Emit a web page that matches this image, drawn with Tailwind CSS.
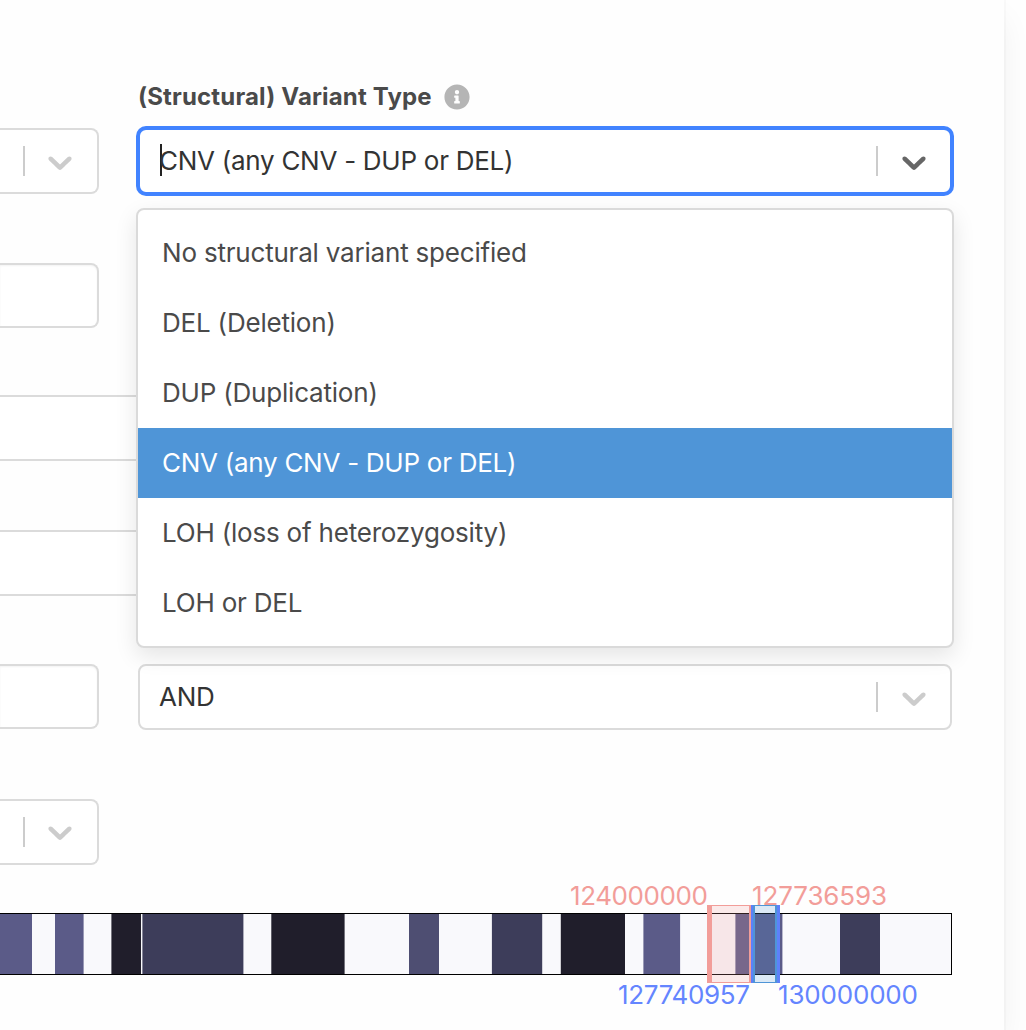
<!DOCTYPE html>
<html lang="en">
<head>
<meta charset="utf-8">
<title>Variant search</title>
<script src="https://cdn.jsdelivr.net/npm/@tailwindcss/browser@4"></script>
</head>
<body class="bg-[#fefefe] w-[1026px] h-[1030px] overflow-hidden font-['Inter',sans-serif] text-[26px]">
<main class="w-[1004px] h-[1030px] bg-[#fefefe] shadow-[0_16px_32px_-4px_rgba(10,10,10,0.07),0_0_0_2px_rgba(10,10,10,0.02)] flex flex-col">
  <div class="flex gap-[39px] pt-20 h-[194px]">
    <div class="w-[99px] flex flex-col justify-end">
      <div class="h-[66px] border-2 border-l-0 border-[#dbdbdb] rounded-r-lg bg-white flex items-center">
        <span class="ml-[23px] w-0.5 h-[30px] bg-[#ccc]"></span>
        <svg class="ml-[15px] mt-px size-10" viewBox="0 0 20 20" fill="#ccc"><path d="M4.516 7.548c0.436-0.446 1.043-0.481 1.576 0l3.908 3.747 3.908-3.747c0.533-0.481 1.141-0.446 1.574 0 0.436 0.445 0.408 1.197 0 1.615-0.406 0.418-4.695 4.502-4.695 4.502-0.217 0.223-0.502 0.335-0.787 0.335s-0.57-0.112-0.789-0.335c0 0-4.287-4.084-4.695-4.502s-0.436-1.17 0-1.615z"/></svg>
      </div>
    </div>
    <div class="w-[814px]">
      <div class="h-12 flex items-start">
        <label class="font-bold text-2xl leading-[34px] text-[#4a4a4a] whitespace-nowrap w-[306px] tracking-[0.16px]">(Structural) Variant Type</label>
        <svg class="size-[26px] mt-1" viewBox="0 0 512 512" fill="#b5b5b5"><path d="M256 8C119.043 8 8 119.083 8 256c0 136.997 111.043 248 248 248s248-111.003 248-248C504 119.083 392.957 8 256 8zm0 110c23.196 0 42 18.804 42 42s-18.804 42-42 42-42-18.804-42-42 18.804-42 42-42zm56 254c0 6.627-5.373 12-12 12h-88c-6.627 0-12-5.373-12-12v-24c0-6.627 5.373-12 12-12h12v-64h-12c-6.627 0-12-5.373-12-12v-24c0-6.627 5.373-12 12-12h64c6.627 0 12 5.373 12 12v100h12c6.627 0 12 5.373 12 12v24z"/></svg>
      </div>
      <div class="relative h-[66px] border-2 border-[#4183ff] ring-2 ring-[#4183ff] rounded-lg bg-white flex items-center">
        <span class="ml-5 w-0.5 h-8 bg-[#222] -mt-0.5"></span>
        <span class="-ml-[3px] pb-0.5 w-[717px] text-[#333] whitespace-nowrap tracking-[-0.27px]">CNV (any CNV - DUP or DEL)</span>
        <span class="w-0.5 h-[30px] bg-[#ccc]"></span>
        <svg class="ml-4 mt-px size-10" viewBox="0 0 20 20" fill="#666"><path d="M4.516 7.548c0.436-0.446 1.043-0.481 1.576 0l3.908 3.747 3.908-3.747c0.533-0.481 1.141-0.446 1.574 0 0.436 0.445 0.408 1.197 0 1.615-0.406 0.418-4.695 4.502-4.695 4.502-0.217 0.223-0.502 0.335-0.787 0.335s-0.57-0.112-0.789-0.335c0 0-4.287-4.084-4.695-4.502s-0.436-1.17 0-1.615z"/></svg>
        <ul class="absolute z-10 top-[78px] -left-1 w-[818px] py-2 border-2 border-[#dadada] rounded-lg bg-white text-[#4a4a4a] tracking-[-0.2px] shadow-[0_8px_22px_rgba(0,0,0,0.1)]">
          <li class="h-[70px] px-6 pb-0.5 flex items-center">No structural variant specified</li>
          <li class="h-[70px] px-6 pb-0.5 flex items-center">DEL (Deletion)</li>
          <li class="h-[70px] px-6 pb-0.5 flex items-center">DUP (Duplication)</li>
          <li class="h-[70px] px-6 pb-0.5 flex items-center bg-[#4f95d7] text-white tracking-[-0.27px]">CNV (any CNV - DUP or DEL)</li>
          <li class="h-[70px] px-6 pb-0.5 flex items-center">LOH (loss of heterozygosity)</li>
          <li class="h-[70px] px-6 pb-0.5 flex items-center">LOH or DEL</li>
        </ul>
      </div>
    </div>
  </div>
  <div class="mt-[69px] w-[99px] h-[65px] border-2 border-l-0 border-[#dbdbdb] rounded-r-lg bg-white shadow-[inset_0_1px_2px_rgba(10,10,10,0.05)]"></div>
  <div class="mt-[67px] w-[952px] h-[66px] border-2 border-l-0 border-[#dbdbdb] rounded-r-lg bg-white"></div>
  <div class="mt-[69px] w-[952px] h-[66px] border-2 border-l-0 border-[#dbdbdb] rounded-r-lg bg-white"></div>
  <div class="mt-[68px] flex gap-[39px]">
    <div class="w-[99px] h-[65px] border-2 border-l-0 border-[#dbdbdb] rounded-r-lg bg-white shadow-[inset_0_1px_2px_rgba(10,10,10,0.05)]"></div>
    <div class="w-[814px] h-[66px] border-2 border-[#dbdbdb] rounded-lg bg-white flex items-center">
      <span class="ml-[19px] pb-0.5 w-[717px] text-[#333] tracking-[-0.27px]">AND</span>
      <span class="w-0.5 h-[30px] bg-[#ccc]"></span>
      <svg class="ml-4 mt-px size-10" viewBox="0 0 20 20" fill="#ccc"><path d="M4.516 7.548c0.436-0.446 1.043-0.481 1.576 0l3.908 3.747 3.908-3.747c0.533-0.481 1.141-0.446 1.574 0 0.436 0.445 0.408 1.197 0 1.615-0.406 0.418-4.695 4.502-4.695 4.502-0.217 0.223-0.502 0.335-0.787 0.335s-0.57-0.112-0.789-0.335c0 0-4.287-4.084-4.695-4.502s-0.436-1.17 0-1.615z"/></svg>
    </div>
  </div>
  <div class="mt-[69px] w-[99px] h-[66px] border-2 border-l-0 border-[#dbdbdb] rounded-r-lg bg-white flex items-center">
    <span class="ml-[23px] w-0.5 h-[30px] bg-[#ccc]"></span>
    <svg class="ml-[15px] size-10" viewBox="0 0 20 20" fill="#ccc"><path d="M4.516 7.548c0.436-0.446 1.043-0.481 1.576 0l3.908 3.747 3.908-3.747c0.533-0.481 1.141-0.446 1.574 0 0.436 0.445 0.408 1.197 0 1.615-0.406 0.418-4.695 4.502-4.695 4.502-0.217 0.223-0.502 0.335-0.787 0.335s-0.57-0.112-0.789-0.335c0 0-4.287-4.084-4.695-4.502s-0.436-1.17 0-1.615z"/></svg>
  </div>
  <!-- Chromosome bands with the start and end ranges -->
  <svg class="mt-[15px] w-[1004px] h-[150px]" viewBox="0 880 1004 150">
    <rect x="-2" y="913" width="954" height="62" fill="#f9f9fc"/>
    <g fill="#5b5b88">
      <rect x="0" y="913" width="32" height="62"/>
      <rect x="55" y="913" width="28.6" height="62"/>
      <rect x="643.4" y="913" width="36.7" height="62"/>
      <rect x="735.4" y="913" width="47" height="62"/>
    </g>
    <g fill="#201e2b">
      <rect x="111.4" y="913" width="29.6" height="62"/>
      <rect x="271.3" y="913" width="73.3" height="62"/>
      <rect x="560.8" y="913" width="64.2" height="62"/>
    </g>
    <g fill="#3d3d5a">
      <rect x="142.4" y="913" width="101" height="62"/>
      <rect x="491.9" y="913" width="50.3" height="62"/>
      <rect x="840" y="913" width="40" height="62"/>
    </g>
    <rect x="409" y="913" width="30" height="62" fill="#4e4e72"/>
    <rect x="-2.5" y="913.5" width="954" height="61" fill="none" stroke="#000"/>
    <g font-family="Inter, sans-serif" font-size="26">
      <g fill="#f29d99">
        <text x="570" y="905" textLength="138">124000000</text>
        <text x="752" y="905" textLength="135">127736593</text>
      </g>
      <g fill="#6485ff">
        <text x="618" y="1004" textLength="132">127740957</text>
        <text x="778" y="1004" textLength="140">130000000</text>
      </g>
    </g>
    <rect x="707" y="905" width="44" height="78" fill="#f29d99" fill-opacity="0.2"/>
    <path d="M707 905h44v1h-44zM707 982h44v1h-44zM707 905h5v78h-5zM749 905h2v78h-2z" fill="#f29d99"/>
    <rect x="751" y="905" width="29" height="78" fill="#4f95d7" fill-opacity="0.2"/>
    <path d="M753 905h24v1h-24zM753 982h24v1h-24zM753 905h2v78h-2zM775 905h2v78h-2z" fill="#4f95d7"/>
    <path d="M751 905h2v78h-2zM777 905h3v78h-3z" fill="#5e80fa"/>
  </svg>
</main>
</body>
</html>
